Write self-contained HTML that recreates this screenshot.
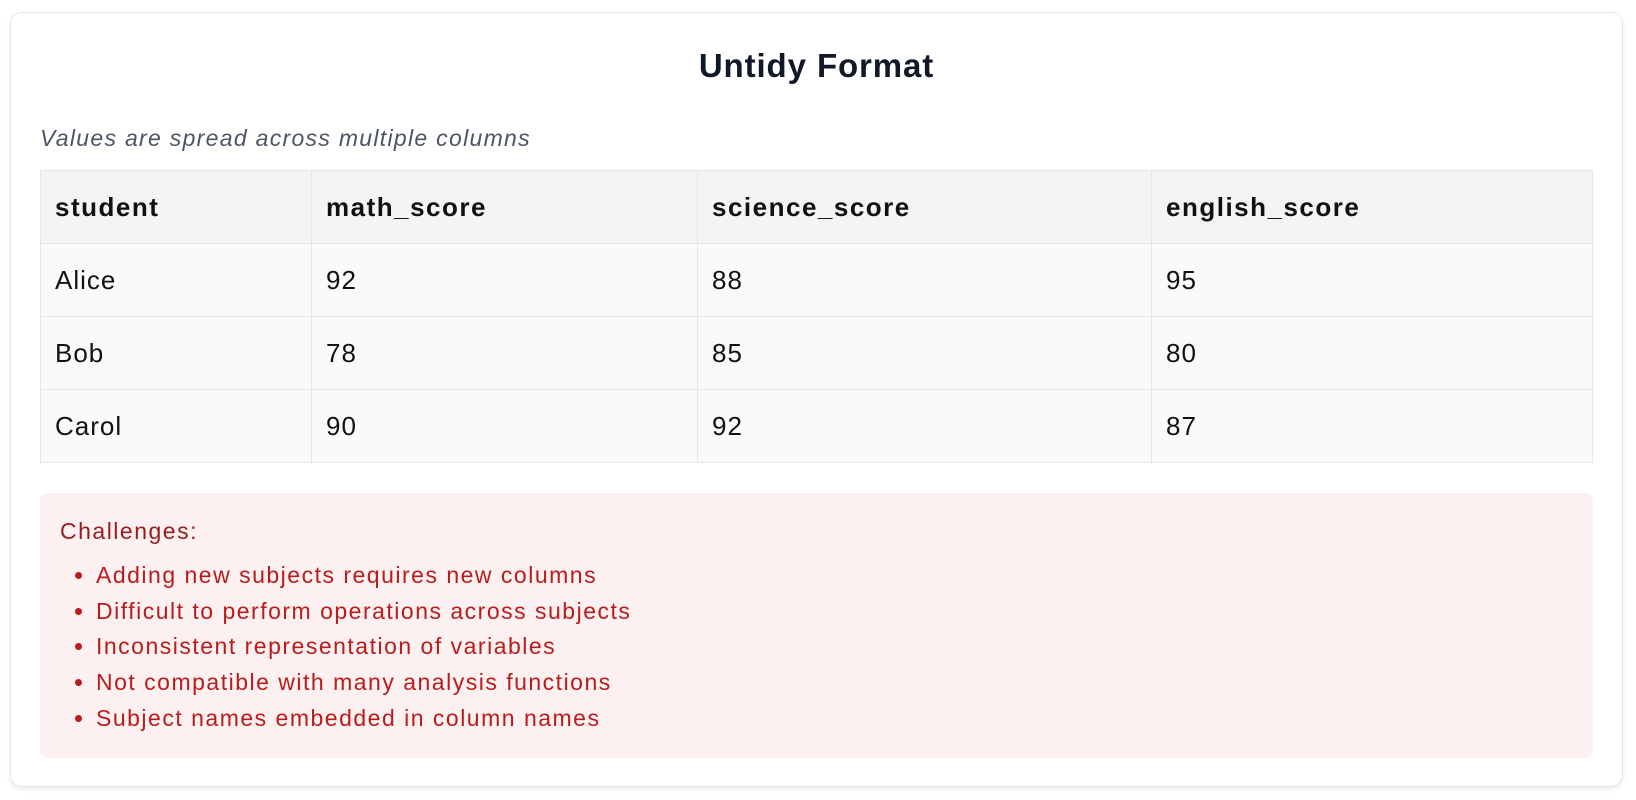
<!DOCTYPE html>
<html><head><meta charset="utf-8"><style>
*{box-sizing:border-box;margin:0;padding:0}
body{width:1636px;height:800px;background:#fff;font-family:"Liberation Sans",Arial,sans-serif;overflow:hidden}
.card{position:absolute;left:10px;top:12px;width:1613px;height:775px;border:1px solid #e5e7eb;border-radius:12px;box-shadow:0 2px 6px rgba(0,0,0,.08);background:#fff}
h1{position:absolute;left:0;right:0;top:34px;text-align:center;font-size:33px;font-weight:bold;color:#111827;letter-spacing:0.9px}
.sub{position:absolute;left:29px;top:112px;font-size:23px;font-style:italic;color:#4b5563;letter-spacing:1.3px}
table{position:absolute;left:29px;top:157px;width:1553px;border-collapse:collapse;font-size:26px;color:#111;letter-spacing:1.0px}
td,th{border:1px solid #e5e7eb;height:73px;padding:0 14px;text-align:left;background:#f9fafb;font-weight:normal}
th{background:#f3f4f6;font-weight:bold;letter-spacing:1.5px}
.box{position:absolute;left:29px;top:480px;width:1553px;height:265px;background:#fcf0f0;border-radius:8px;padding:25px 20px;color:#b91c1c;font-size:23px;letter-spacing:1.5px}
.box .t{color:#991b1b;margin-bottom:13px}
ul{padding-left:36px}
li{line-height:35.7px}
</style></head><body>
<div class="card">
<h1>Untidy Format</h1>
<div class="sub">Values are spread across multiple columns</div>
<table>
<tr><th style="width:271px">student</th><th style="width:386px">math_score</th><th style="width:454px">science_score</th><th>english_score</th></tr>
<tr><td>Alice</td><td>92</td><td>88</td><td>95</td></tr>
<tr><td>Bob</td><td>78</td><td>85</td><td>80</td></tr>
<tr><td>Carol</td><td>90</td><td>92</td><td>87</td></tr>
</table>
<div class="box"><div class="t">Challenges:</div>
<ul>
<li>Adding new subjects requires new columns</li>
<li>Difficult to perform operations across subjects</li>
<li>Inconsistent representation of variables</li>
<li>Not compatible with many analysis functions</li>
<li>Subject names embedded in column names</li>
</ul></div>
</div>
</body></html>
